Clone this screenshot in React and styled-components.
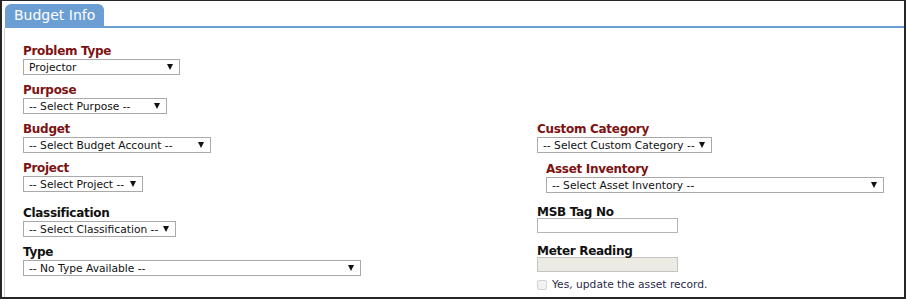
import React from 'react';
import styled, { createGlobalStyle } from 'styled-components';

const GlobalStyle = createGlobalStyle`
  html, body {
    margin: 0;
    padding: 0;
    background: #ffffff;
  }
  body {
    font-family: "DejaVu Sans", Verdana, sans-serif;
  }
`;

const Frame = styled.div`
  width: 906px;
  height: 299px;
  box-sizing: border-box;
  border-top: 1px solid #262626;
  border-left: 2px solid #262626;
  border-right: 2px solid #262626;
  border-bottom: 2px solid #262626;
  display: flex;
  flex-direction: column;
`;

const TabBar = styled.div`
  padding: 3px 0 0 3px;
  display: flex;
`;

const TabStrip = styled.div`
  flex: 1;
  border-bottom: 2px solid #6b9ed3;
  display: flex;
`;

const Tab = styled.div`
  width: 99px;
  height: 22px;
  box-sizing: border-box;
  padding-left: 9px;
  background: #6b9ed3;
  border-radius: 6px 6px 0 0;
  color: #ffffff;
  font-size: 14px;
  line-height: 23px;
  white-space: nowrap;
`;

const Panel = styled.div`
  flex: 1;
  margin-left: 2px;
  border-left: 1px solid #cfcfcf;
  padding: 16px 0 0 18px;
`;

const Columns = styled.div`
  display: grid;
  grid-template-columns: 514px 1fr;
  margin-top: 8px;
`;

const Column = styled.div`
  display: flex;
  flex-direction: column;
`;

const Field = styled.div`
  margin-top: ${(p) => p.$mt || 0}px;
  margin-left: ${(p) => p.$indent || 0}px;
`;

const Label = styled.div`
  font-size: 12px;
  font-weight: bold;
  letter-spacing: -0.3px;
  line-height: 15px;
  color: ${(p) => (p.$plain ? '#111111' : '#7d1212')};
  white-space: nowrap;
`;

const SelectBox = styled.div`
  width: ${(p) => p.$w}px;
  height: 16px;
  box-sizing: border-box;
  border: 1px solid #a9a9a9;
  background: #ffffff;
  display: flex;
  align-items: center;
  justify-content: space-between;
  padding: 0 6px 0 5px;
  font-size: 10.7px;
  color: #111111;
  white-space: nowrap;
`;

const Arrow = styled.span`
  width: 0;
  height: 0;
  border-left: 3px solid transparent;
  border-right: 3px solid transparent;
  border-top: 6px solid #111111;
  flex-shrink: 0;
`;

const TextBox = styled.div`
  width: 141px;
  height: 15px;
  box-sizing: border-box;
  margin-top: -2px;
  border: 1px solid ${(p) => (p.$disabled ? '#c4c4c0' : '#b4b4b4')};
  background: ${(p) => (p.$disabled ? '#ebebe4' : '#ffffff')};
`;

const CheckRow = styled.div`
  margin-top: 6px;
  display: flex;
  align-items: center;
  gap: 5px;
  font-size: 10.7px;
  color: #2a2a4a;
  white-space: nowrap;
`;

const Check = styled.span`
  width: 10px;
  height: 10px;
  box-sizing: border-box;
  border: 1px solid #d2d2d2;
  border-radius: 2px;
  background: #f2f2f2;
`;

const Select = ({ w, children }) => (
  <SelectBox $w={w}>
    <span>{children}</span>
    <Arrow />
  </SelectBox>
);

const App = () => {
  return (
    <>
      <GlobalStyle />
      <Frame>
        <TabBar>
          <TabStrip>
            <Tab>Budget Info</Tab>
          </TabStrip>
        </TabBar>
        <Panel>
          <Field>
            <Label>Problem Type</Label>
            <Select w={157}>Projector</Select>
          </Field>
          <Field $mt={8}>
            <Label>Purpose</Label>
            <Select w={144}>-- Select Purpose --</Select>
          </Field>
          <Columns>
            <Column>
              <Field>
                <Label>Budget</Label>
                <Select w={188}>-- Select Budget Account --</Select>
              </Field>
              <Field $mt={8}>
                <Label>Project</Label>
                <Select w={120}>-- Select Project --</Select>
              </Field>
              <Field $mt={14}>
                <Label $plain>Classification</Label>
                <Select w={153}>-- Select Classification --</Select>
              </Field>
              <Field $mt={8}>
                <Label $plain>Type</Label>
                <Select w={338}>-- No Type Available --</Select>
              </Field>
            </Column>
            <Column>
              <Field>
                <Label>Custom Category</Label>
                <Select w={175}>-- Select Custom Category --</Select>
              </Field>
              <Field $mt={9} $indent={9}>
                <Label>Asset Inventory</Label>
                <Select w={338}>-- Select Asset Inventory --</Select>
              </Field>
              <Field $mt={12}>
                <Label $plain>MSB Tag No</Label>
                <TextBox />
              </Field>
              <Field $mt={11}>
                <Label $plain>Meter Reading</Label>
                <TextBox $disabled />
                <CheckRow>
                  <Check />
                  <span>Yes, update the asset record.</span>
                </CheckRow>
              </Field>
            </Column>
          </Columns>
        </Panel>
      </Frame>
    </>
  );
};

export default App;
